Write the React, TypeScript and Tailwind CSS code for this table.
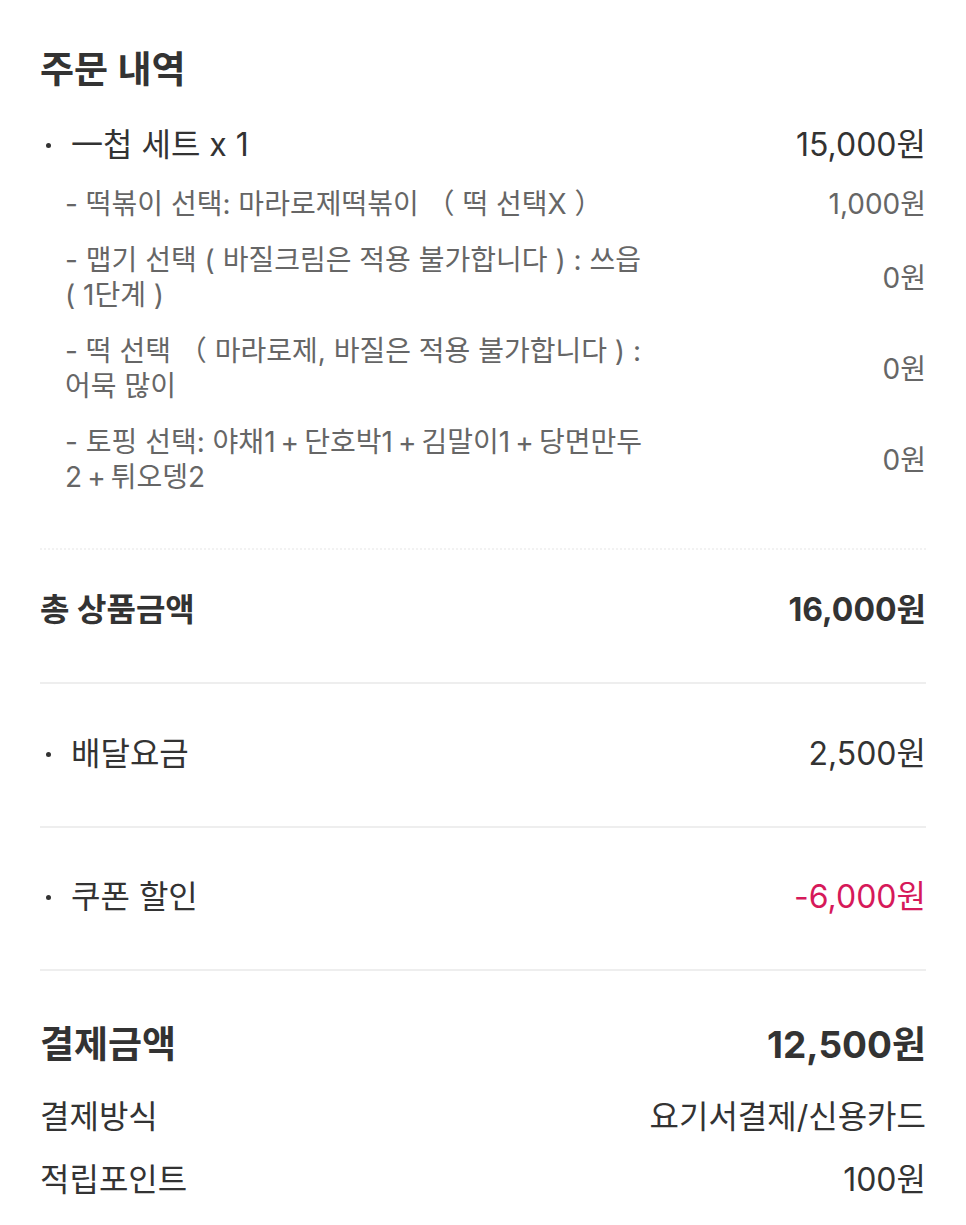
import React from 'react';

interface SubOption {
  lines: string[];
  price: string;
}

const options: SubOption[] = [
  { lines: ['- 떡볶이 선택: 마라로제떡볶이 （ 떡 선택X ）'], price: '1,000원' },
  { lines: ['- 맵기 선택 ( 바질크림은 적용 불가합니다 ) : 쓰읍', '( 1단계 )'], price: '0원' },
  { lines: ['- 떡 선택 （ 마라로제, 바질은 적용 불가합니다 ) :', '어묵 많이'], price: '0원' },
  { lines: ['- 토핑 선택: 야채1\u2009+\u2009단호박1\u2009+\u2009김말이1\u2009+\u2009당면만두', '2\u2009+\u2009튀오뎅2'], price: '0원' },
];

function Row({ label, value, valueClass = '' }: { label: string; value: string; valueClass?: string }) {
  return (
    <div className="flex items-center justify-between text-[32px] leading-[40px] text-[#333]">
      <div className="flex items-center">
        <span className="ml-[6px] mr-[20px] h-[5px] w-[5px] rounded-full bg-[#333]" />
        <span>{label}</span>
      </div>
      <span className={valueClass}>{value}</span>
    </div>
  );
}

export default function App() {
  return (
    <div className="min-h-screen bg-white px-[40px] pt-[50px] font-['Inter','Noto_Sans_CJK_KR',sans-serif] text-[#333]">
      <h1 className="text-[37px] leading-[40px] font-semibold">주문 내역</h1>

      <div className="mt-[35px]">
        <Row label="一첩 세트 x 1" value="15,000원" />
      </div>

      <div className="mt-[22px] flex flex-col gap-[21px] text-[#666]">
        {options.map((opt, i) => (
          <div key={i} className="flex items-center justify-between pl-[25px] text-[28px] leading-[35px]">
            <div>
              {opt.lines.map((l, j) => (
                <div key={j}>{l}</div>
              ))}
            </div>
            <span>{opt.price}</span>
          </div>
        ))}
      </div>

      <div className="mt-[53px] border-t-2 border-dotted border-[#f2f2f2]" />

      <div className="flex items-center justify-between pt-[40px] pb-[52px] text-[32px] leading-[40px] font-bold">
        <span>총 상품금액</span>
        <span>16,000원</span>
      </div>

      <div className="border-t-2 border-[#eeeeee] pt-[50px] pb-[52px]">
        <Row label="배달요금" value="2,500원" />
      </div>

      <div className="border-t-2 border-[#eeeeee] pt-[49px] pb-[52px]">
        <Row label="쿠폰 할인" value="-6,000원" valueClass="text-[#d6195a]" />
      </div>

      <div className="border-t-2 border-[#eeeeee] pt-[52px]">
        <div className="flex items-center justify-between text-[37px] leading-[44px] font-bold">
          <span>결제금액</span>
          <span>12,500원</span>
        </div>
        <div className="mt-[32px] flex items-center justify-between text-[32px] leading-[36px]">
          <span>결제방식</span>
          <span>요기서결제/신용카드</span>
        </div>
        <div className="mt-[27px] flex items-center justify-between text-[32px] leading-[36px]">
          <span>적립포인트</span>
          <span>100원</span>
        </div>
      </div>
    </div>
  );
}
